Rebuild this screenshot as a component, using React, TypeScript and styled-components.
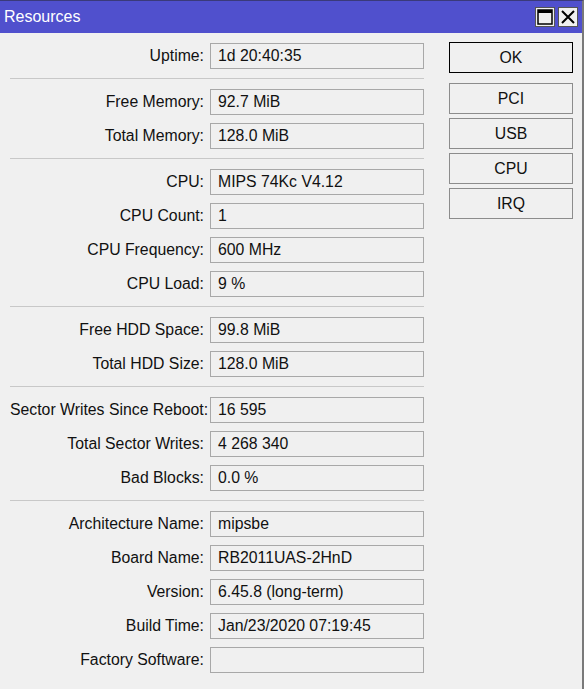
import React from 'react';
import styled, { createGlobalStyle } from 'styled-components';

const GlobalStyle = createGlobalStyle`
  html, body {
    margin: 0;
    padding: 0;
    background: #f0f0f0;
  }
  body {
    font-family: "Liberation Sans", Arial, sans-serif;
    font-size: 15.8px;
    color: #111;
  }
`;

type Row = { label: string; value: string };

const groups: Row[][] = [
  [{ label: 'Uptime', value: '1d 20:40:35' }],
  [
    { label: 'Free Memory', value: '92.7 MiB' },
    { label: 'Total Memory', value: '128.0 MiB' },
  ],
  [
    { label: 'CPU', value: 'MIPS 74Kc V4.12' },
    { label: 'CPU Count', value: '1' },
    { label: 'CPU Frequency', value: '600 MHz' },
    { label: 'CPU Load', value: '9 %' },
  ],
  [
    { label: 'Free HDD Space', value: '99.8 MiB' },
    { label: 'Total HDD Size', value: '128.0 MiB' },
  ],
  [
    { label: 'Sector Writes Since Reboot', value: '16 595' },
    { label: 'Total Sector Writes', value: '4 268 340' },
    { label: 'Bad Blocks', value: '0.0 %' },
  ],
  [
    { label: 'Architecture Name', value: 'mipsbe' },
    { label: 'Board Name', value: 'RB2011UAS-2HnD' },
    { label: 'Version', value: '6.45.8 (long-term)' },
    { label: 'Build Time', value: 'Jan/23/2020 07:19:45' },
    { label: 'Factory Software', value: '' },
  ],
];

const buttons = ['OK', 'PCI', 'USB', 'CPU', 'IRQ'];

function App() {
  return (
    <Window>
      <GlobalStyle />
      <TitleBar>
        <Title>Resources</Title>
        <TitleButtons>
          <TitleButton aria-label="maximize">
            <svg width="16" height="16" viewBox="0 0 16 16">
              <rect x="1" y="1" width="14" height="14" fill="none" stroke="#000" strokeWidth="1.5" />
              <rect x="1" y="1" width="14" height="3" fill="#000" />
            </svg>
          </TitleButton>
          <TitleButton aria-label="close">
            <svg width="16" height="16" viewBox="0 0 16 16">
              <path d="M2 2 L14 14 M14 2 L2 14" stroke="#000" strokeWidth="2" />
            </svg>
          </TitleButton>
        </TitleButtons>
      </TitleBar>
      <Body>
        <Form>
          {groups.map((g, gi) => (
            <React.Fragment key={gi}>
              {gi > 0 && <Separator />}
              {g.map((r) => (
                <FieldRow key={r.label}>
                  <Label>{r.label}:</Label>
                  <Field>{r.value}</Field>
                </FieldRow>
              ))}
            </React.Fragment>
          ))}
        </Form>
        <Side>
          {buttons.map((b, i) => (
            <Button key={b} $primary={i === 0}>
              {b}
            </Button>
          ))}
        </Side>
      </Body>
    </Window>
  );
}

const Window = styled.div`
  width: 584px;
  height: 689px;
  box-sizing: border-box;
  border-top: 1px solid #3a3a7a;
  border-right: 2px solid #7a7a7a;
  display: flex;
  flex-direction: column;
  background: #f0f0f0;
`;

const TitleBar = styled.div`
  height: 32px;
  background: #5050cd;
  display: flex;
  align-items: center;
  justify-content: space-between;
  padding: 0 4px 0 4px;
`;

const Title = styled.div`
  color: #fff;
  font-size: 16px;
`;

const TitleButtons = styled.div`
  display: flex;
  gap: 3px;
`;

const TitleButton = styled.div`
  width: 20px;
  height: 20px;
  box-sizing: border-box;
  background: #f0f0f0;
  border: 1px solid #555;
  display: flex;
  align-items: center;
  justify-content: center;
`;

const Body = styled.div`
  display: flex;
  padding: 10px 0 0 10px;
`;

const Form = styled.div`
  width: 414px;
  display: flex;
  flex-direction: column;
  gap: 8px;
`;

const FieldRow = styled.div`
  display: flex;
  align-items: center;
  height: 26px;
`;

const Label = styled.div`
  width: 200px;
  flex-shrink: 0;
  box-sizing: border-box;
  text-align: right;
  padding-right: 6px;
  white-space: nowrap;
  direction: rtl;
  unicode-bidi: plaintext;
`;

const Field = styled.div`
  width: 214px;
  flex-shrink: 0;
  height: 26px;
  box-sizing: border-box;
  border: 1px solid #a8a8a8;
  padding: 0 7px;
  display: flex;
  align-items: center;
  white-space: nowrap;
`;

const Separator = styled.div`
  height: 1px;
  background: #c8c8c8;
  margin: 1px 0 2px;
`;

const Side = styled.div`
  margin: -1px 0 0 25px;
  width: 124px;
  display: flex;
  flex-direction: column;
  gap: 4px;
`;

const Button = styled.div<{ $primary?: boolean }>`
  height: 31px;
  box-sizing: border-box;
  border: 1px solid ${(p) => (p.$primary ? '#000' : '#8c8c8c')};
  display: flex;
  align-items: center;
  justify-content: center;
  margin-bottom: ${(p) => (p.$primary ? '6px' : '0')};
`;

export default App;
